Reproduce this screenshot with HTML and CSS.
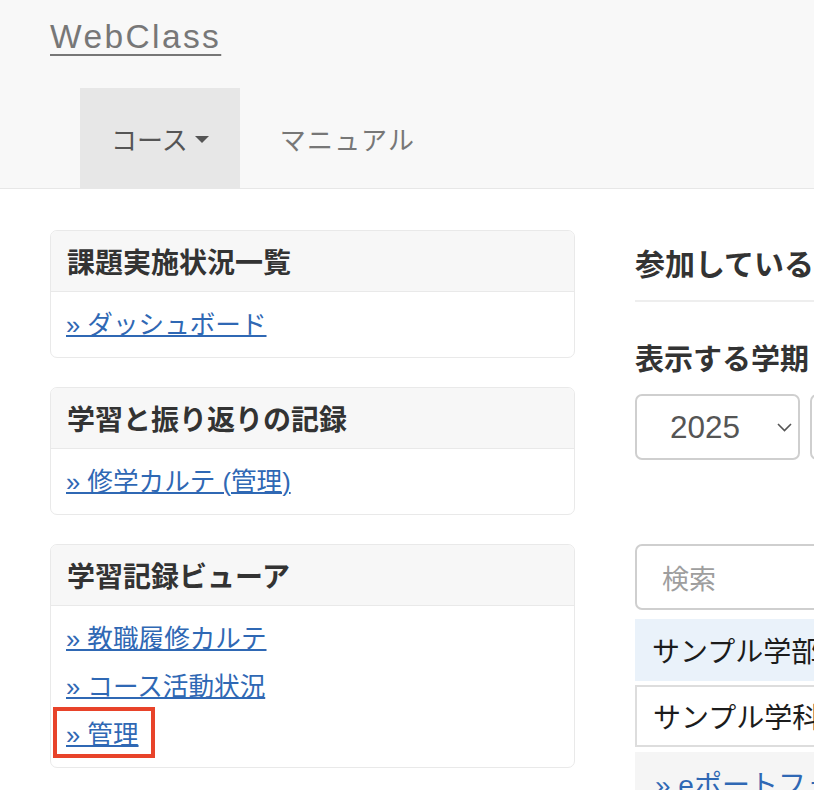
FILE: index.html
```html
<!DOCTYPE html>
<html lang="ja">
<head>
<meta charset="utf-8">
<title>WebClass</title>
<link rel="stylesheet" href="styles.css">
</head>
<body>
<header class="navbar">
  <div class="brand-row"><a class="brand" href="#">WebClass</a></div>
  <ul class="nav">
    <li class="nav-item active"><a href="#">コース<span class="caret"></span></a></li>
    <li class="nav-item manual"><a href="#">マニュアル</a></li>
  </ul>
</header>
<main class="container">
  <aside class="side">
    <section class="panel">
      <h3 class="panel-title">課題実施状況一覧</h3>
      <div class="panel-body">
        <div class="item"><a class="link" href="#">» ダッシュボード</a></div>
      </div>
    </section>
    <section class="panel">
      <h3 class="panel-title">学習と振り返りの記録</h3>
      <div class="panel-body">
        <div class="item"><a class="link" href="#">» 修学カルテ (管理)</a></div>
      </div>
    </section>
    <section class="panel">
      <h3 class="panel-title">学習記録ビューア</h3>
      <div class="panel-body">
        <div class="item"><a class="link" href="#">» 教職履修カルテ</a></div>
        <div class="item"><a class="link" href="#">» コース活動状況</a></div>
        <div class="item marked"><a class="link" href="#">» 管理</a><span class="mark-box"></span></div>
      </div>
    </section>
  </aside>
  <div class="content">
    <h2 class="page-title">参加しているコース</h2>
    <h3 class="sub-title">表示する学期</h3>
    <div class="term-row">
      <div class="select year">2025<svg class="chev" width="15" height="9" viewBox="0 0 15 9"><path d="M1 1 L7.5 7.5 L14 1" fill="none" stroke="#555" stroke-width="1.6"/></svg></div>
      <div class="select term">前期<svg class="chev" width="15" height="9" viewBox="0 0 15 9"><path d="M1 1 L7.5 7.5 L14 1" fill="none" stroke="#555" stroke-width="1.6"/></svg></div>
    </div>
    <input class="search" type="text" placeholder="検索">
    <ul class="course-list">
      <li class="row dept">サンプル学部</li>
      <li class="row major">サンプル学科</li>
      <li class="row course"><a class="row-link" href="#">» eポートフォリオ</a></li>
    </ul>
  </div>
</main>
</body>
</html>
```

FILE: styles.css
```css
html, body {
  margin: 0;
  padding: 0;
}
body {
  font-family: "Liberation Sans", "Noto Sans CJK JP", sans-serif;
  color: #333;
  background: #fff;
  overflow: hidden;
  width: 814px;
  height: 790px;
}
a {
  text-decoration: none;
}

/* navbar */
.navbar {
  background: #f8f8f8;
  border-bottom: 1px solid #e7e7e7;
  padding-left: 50px;
}
.brand-row {
  height: 88px;
}
.brand {
  display: inline-block;
  margin-top: 17px;
  font-size: 33.5px;
  line-height: 40px;
  letter-spacing: 2.4px;
  color: #777;
  text-decoration: underline;
  text-decoration-thickness: 2px;
  text-underline-offset: 6px;
}
.nav {
  list-style: none;
  margin: 0 0 0 30px;
  padding: 0;
  display: flex;
  height: 100px;
}
.nav-item a {
  display: flex;
  align-items: center;
  height: 100px;
  font-family: "Noto Sans CJK JP", sans-serif;
  font-size: 26px;
  color: #777;
}
.nav-item.active a {
  background: #e7e7e7;
  color: #555;
  padding: 0 31px 0 31px;
}
.nav-item.manual a {
  padding: 0 30px 0 40px;
  letter-spacing: 1.3px;
}
.caret {
  display: inline-block;
  width: 0;
  height: 0;
  margin-left: 7px;
  margin-top: 3px;
  border-top: 7px solid #555;
  border-left: 7px solid transparent;
  border-right: 7px solid transparent;
}

/* layout */
.container {
  display: flex;
  gap: 60px;
  padding: 41px 0 0 50px;
}
.side {
  flex: 0 0 525px;
  display: flex;
  flex-direction: column;
  gap: 29px;
}
.content {
  flex: 0 0 800px;
}

/* panels */
.panel {
  border: 1px solid #e9e9e9;
  border-radius: 7px;
  overflow: hidden;
}
.panel-title {
  margin: 0;
  height: 60px;
  line-height: 60px;
  padding-left: 16px;
  background: #f7f7f7;
  border-bottom: 1px solid #e9e9e9;
  font-family: "Noto Sans CJK JP", sans-serif;
  font-size: 28px;
  font-weight: 700;
  color: #333;
}
.panel-body {
  padding: 16px 15px 14px;
  display: flex;
  flex-direction: column;
  gap: 13px;
}
.item {
  line-height: 35px;
  height: 35px;
  font-size: 25.6px;
}
.link {
  color: #2f68b4;
  text-decoration: underline;
  text-decoration-thickness: 2px;
  font-family: "Liberation Sans", "Noto Sans CJK JP", sans-serif;
}
.marked {
  position: relative;
  align-self: flex-start;
}
.mark-box {
  position: absolute;
  left: -13px;
  top: -11px;
  width: 102px;
  height: 51px;
  box-sizing: border-box;
  border: 4px solid #e8432a;
}

/* content */
.page-title {
  margin: 12px 0 0;
  line-height: 40px;
  padding-bottom: 18px;
  border-bottom: 2px solid #eeeeee;
  font-family: "Noto Sans CJK JP", sans-serif;
  font-size: 30px;
  font-weight: 700;
  color: #333;
  white-space: nowrap;
}
.sub-title {
  margin: 35px 0 0;
  line-height: 40px;
  font-family: "Noto Sans CJK JP", sans-serif;
  font-size: 29px;
  font-weight: 700;
  color: #333;
  white-space: nowrap;
}
.term-row {
  display: flex;
  gap: 10px;
  margin-top: 17px;
}
.select {
  box-sizing: border-box;
  height: 66px;
  border: 2px solid #cfcfcf;
  border-radius: 7px;
  display: flex;
  align-items: center;
  justify-content: space-between;
  padding: 0 6px 0 33px;
  font-size: 31.5px;
  color: #555;
  background: #fff;
}
.select.year {
  width: 165px;
}
.select.term {
  width: 165px;
  font-family: "Noto Sans CJK JP", sans-serif;
}
.chev {
  display: block;
}
.search {
  display: block;
  box-sizing: border-box;
  width: 700px;
  height: 66px;
  margin: 84px 0 0;
  border: 2px solid #cfcfcf;
  border-radius: 7px;
  padding: 0 0 0 25px;
  font-family: "Noto Sans CJK JP", sans-serif;
  font-size: 27px;
  color: #555;
  outline: none;
}
.search::placeholder {
  color: #9e9e9e;
}
.course-list {
  list-style: none;
  margin: 9px 0 0;
  padding: 0;
  width: 700px;
  display: flex;
  flex-direction: column;
}
.row {
  box-sizing: border-box;
  height: 62px;
  line-height: 58px;
  font-family: "Noto Sans CJK JP", sans-serif;
  font-size: 28px;
  color: #1c1c1c;
  white-space: nowrap;
}
.row.dept {
  background: #eaf2fa;
  padding-left: 17px;
  line-height: 62px;
}
.row.major {
  margin-top: 4px;
  border: 2px solid #dddddd;
  padding-left: 16px;
}
.row.course {
  margin-top: 5px;
  background: #f5f5f5;
  padding-left: 20px;
  line-height: 62px;
}
.row-link {
  color: #2f68b4;
  font-family: "Liberation Sans", "Noto Sans CJK JP", sans-serif;
}
```
